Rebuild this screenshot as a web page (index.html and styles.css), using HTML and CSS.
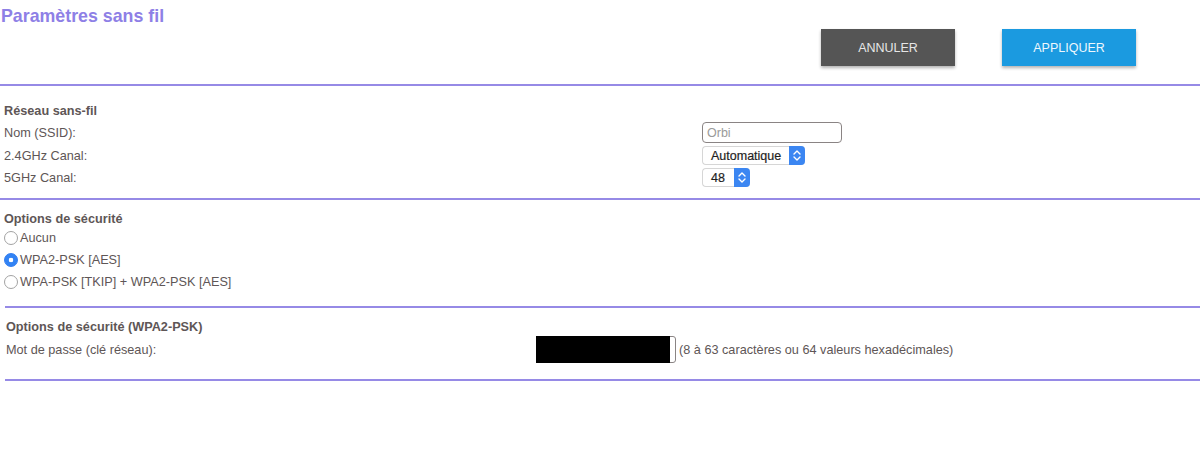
FILE: index.html
```html
<!doctype html>
<html lang="fr">
<head>
  <meta charset="utf-8">
  <title>Paramètres sans fil</title>
  <link rel="stylesheet" href="styles.css">
</head>
<body>

  <div class="page-head">
    <h1>Paramètres sans fil</h1>
    <div class="actions">
      <button type="button" class="btn btn-cancel">ANNULER</button>
      <button type="submit" class="btn btn-apply">APPLIQUER</button>
    </div>
  </div>
  <hr class="sep">

  <div class="section section-wifi">
    <h2>Réseau sans-fil</h2>
    <div class="row">
      <span class="label">Nom (SSID):</span>
      <input type="text" class="text-input" placeholder="Orbi">
    </div>
    <div class="row">
      <span class="label">2.4GHz Canal:</span>
      <span class="select select-wide">
        <span class="value">Automatique</span>
        <span class="stepper">
          <svg width="16" height="19" viewBox="0 0 16 19"><path d="M5 8 L8 5 L11 8 M5 11 L8 14 L11 11" fill="none" stroke="#fff" stroke-width="1.4" stroke-linecap="round" stroke-linejoin="round"/></svg>
        </span>
      </span>
    </div>
    <div class="row">
      <span class="label">5GHz Canal:</span>
      <span class="select select-small">
        <span class="value">48</span>
        <span class="stepper">
          <svg width="16" height="19" viewBox="0 0 16 19"><path d="M5 8 L8 5 L11 8 M5 11 L8 14 L11 11" fill="none" stroke="#fff" stroke-width="1.4" stroke-linecap="round" stroke-linejoin="round"/></svg>
        </span>
      </span>
    </div>
  </div>
  <hr class="sep">

  <div class="section section-security">
    <h2>Options de sécurité</h2>
    <label class="radio"><input type="radio" name="security"><span>Aucun</span></label>
    <label class="radio"><input type="radio" name="security" checked><span>WPA2-PSK [AES]</span></label>
    <label class="radio"><input type="radio" name="security"><span>WPA-PSK [TKIP] + WPA2-PSK [AES]</span></label>
  </div>
  <hr class="sep sep-inset">

  <div class="section section-psk">
    <h2>Options de sécurité (WPA2-PSK)</h2>
    <div class="row row-psk">
      <span class="label">Mot de passe (clé réseau):</span>
      <div class="pw-field"><span class="redacted"></span></div>
      <span class="hint">(8 à 63 caractères ou 64 valeurs hexadécimales)</span>
    </div>
  </div>
  <hr class="sep sep-inset">

</body>
</html>
```

FILE: styles.css
```css
body {
  margin: 0;
  font-family: "Liberation Sans", Arial, Helvetica, sans-serif;
  font-size: 12.7px;
  color: #5e5656;
  background: #fff;
}
h1 {
  margin: 0;
  padding: 6px 0 0 1px;
  font-size: 17.8px;
  line-height: 21px;
  color: #8e80e6;
}
.actions {
  display: flex;
  justify-content: flex-end;
  gap: 47px;
  margin-top: 2px;
  padding-right: 64px;
}
.btn {
  width: 134px;
  height: 37px;
  border: none;
  font-family: inherit;
  font-size: 12.5px;
  cursor: pointer;
  box-shadow: 0 2px 3px rgba(0,0,0,0.3);
}
.btn-cancel {
  background: #555555;
  color: #e6e6e6;
}
.btn-apply {
  background: #1b9ae0;
  color: #eef7fd;
}
.sep {
  border: none;
  height: 2px;
  margin: 18px 0 0 0;
  background: #968ae6;
}
.section + .sep {
  margin-top: 0;
}
.sep-inset {
  margin-left: 5px !important;
}
h2 {
  margin: 0 0 7px 0;
  font-size: 12.7px;
  line-height: 16px;
  font-weight: bold;
}
.section {
  line-height: 16px;
}
.section-wifi {
  padding: 17px 0 11px 4px;
}
.section-wifi h2 {
  margin-bottom: 3px;
}
.section-security {
  padding: 11px 0 13px 4px;
}
.section-security h2 {
  margin-bottom: 0;
}
.section-psk {
  padding: 11px 0 16px 6px;
}
.section-psk h2 {
  margin-bottom: 1px;
}
.row {
  display: grid;
  grid-template-columns: 698px auto;
  align-items: center;
  justify-content: start;
  margin-bottom: 3px;
}
.row:last-child {
  margin-bottom: 0;
}
.text-input {
  box-sizing: border-box;
  width: 140px;
  height: 21px;
  margin: 0;
  padding: 0 4px;
  border: 1px solid #8a8484;
  border-radius: 4px;
  font-family: inherit;
  font-size: 12.5px;
}
.text-input::placeholder {
  color: #9a9a9a;
}
.select {
  box-sizing: border-box;
  display: flex;
  align-items: center;
  height: 19px;
  background: #fff;
  border: 1px solid #d6d6d6;
  border-right: none;
  border-radius: 4px;
  color: #1e1e1e;
  font-size: 12.5px;
}
.select-wide {
  width: 103px;
}
.select-small {
  width: 48px;
}
.select .value {
  flex: 1;
  padding-left: 8px;
  -webkit-text-stroke: 0.2px #1e1e1e;
}
.stepper {
  display: flex;
  width: 16px;
  height: 19px;
  margin: -1px 0;
  background: #3b86f2;
  border-radius: 0 4px 4px 0;
}
.radio {
  display: flex;
  align-items: center;
  height: 22px;
}
.radio input {
  appearance: none;
  -webkit-appearance: none;
  box-sizing: border-box;
  width: 14px;
  height: 14px;
  margin: 0 2px 0 0;
  border: 1px solid #a3a3a3;
  border-radius: 50%;
  background: #fff;
}
.radio input:checked {
  border-color: #2f7cf0;
  background: radial-gradient(circle, #fff 0 2px, #3283f4 2.6px);
}
.row-psk {
  grid-template-columns: 530px auto auto;
}
.pw-field {
  box-sizing: border-box;
  width: 140px;
  height: 27px;
  border: 1px solid #8a8484;
  border-radius: 3px;
  display: flex;
}
.redacted {
  width: 134px;
  margin: -1px 0 -1px -1px;
  background: #000;
}
.hint {
  margin-left: 3px;
}
```
